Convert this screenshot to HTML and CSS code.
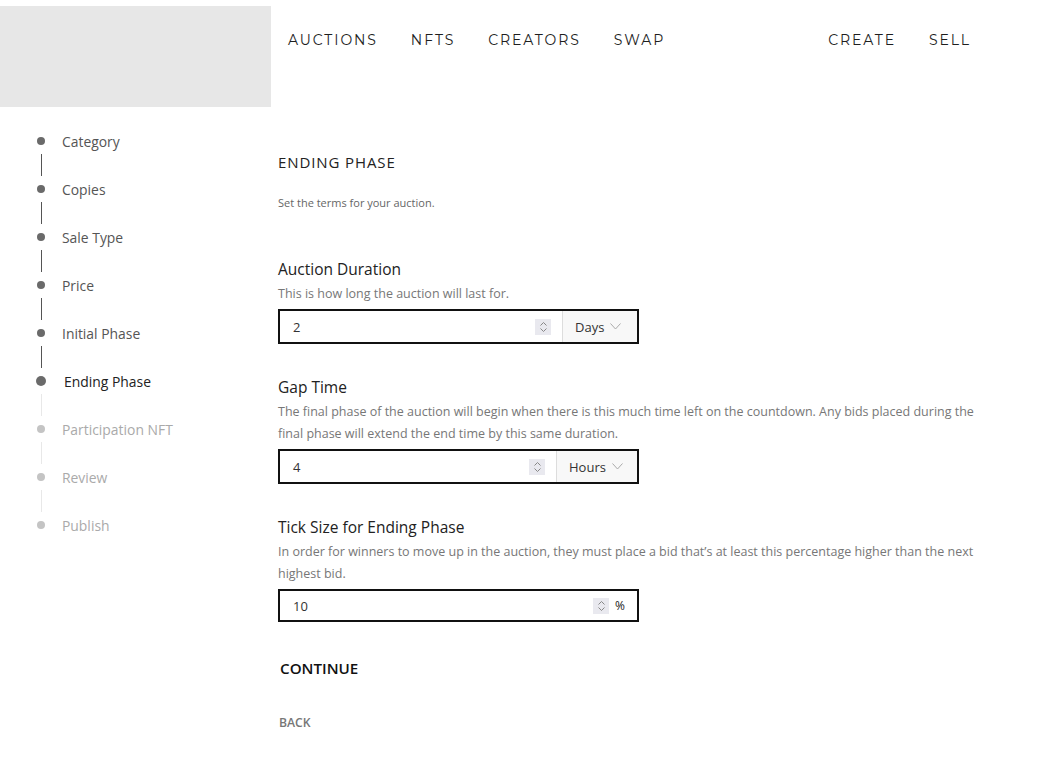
FILE: index.html
```html
<!DOCTYPE html>
<html>
<head>
<meta charset="utf-8">
<link rel="stylesheet" href="styles.css">
</head>
<body>
<header class="header">
  <div class="logo-box"></div>
  <nav class="nav">
    <div class="nav-left">
      <a class="nav-link">AUCTIONS</a>
      <a class="nav-link">NFTS</a>
      <a class="nav-link">CREATORS</a>
      <a class="nav-link">SWAP</a>
    </div>
    <div class="nav-right">
      <a class="nav-link">CREATE</a>
      <a class="nav-link">SELL</a>
    </div>
  </nav>
</header>
<div class="page">
  <aside class="steps">
    <div class="step done"><span class="dot"></span><span class="label">Category</span></div>
    <div class="connector done"></div>
    <div class="step done"><span class="dot"></span><span class="label">Copies</span></div>
    <div class="connector done"></div>
    <div class="step done"><span class="dot"></span><span class="label">Sale Type</span></div>
    <div class="connector done"></div>
    <div class="step done"><span class="dot"></span><span class="label">Price</span></div>
    <div class="connector done"></div>
    <div class="step done"><span class="dot"></span><span class="label">Initial Phase</span></div>
    <div class="connector done"></div>
    <div class="step current"><span class="dot"></span><span class="label">Ending Phase</span></div>
    <div class="connector"></div>
    <div class="step"><span class="dot"></span><span class="label">Participation NFT</span></div>
    <div class="connector"></div>
    <div class="step"><span class="dot"></span><span class="label">Review</span></div>
    <div class="connector"></div>
    <div class="step"><span class="dot"></span><span class="label">Publish</span></div>
  </aside>
  <main class="main">
    <h1 class="title">ENDING PHASE</h1>
    <p class="subtitle">Set the terms for your auction.</p>

    <section class="field first">
      <h2 class="field-title">Auction Duration</h2>
      <p class="field-desc">This is how long the auction will last for.</p>
      <div class="input-box">
        <span class="value">2</span>
        <span class="spinner"><svg width="9" height="12" viewBox="0 0 9 12"><path d="M1.5 4.5 L4.5 1.5 L7.5 4.5 M1.5 7.5 L4.5 10.5 L7.5 7.5" fill="none" stroke="#888" stroke-width="1"/></svg></span>
        <span class="select">Days <svg width="11" height="7" viewBox="0 0 11 7"><path d="M0.5 0.5 L5.5 6 L10.5 0.5" fill="none" stroke="#aaa" stroke-width="1"/></svg></span>
      </div>
    </section>

    <section class="field">
      <h2 class="field-title">Gap Time</h2>
      <p class="field-desc">The final phase of the auction will begin when there is this much time left on the countdown. Any bids placed during the final phase will extend the end time by this same duration.</p>
      <div class="input-box">
        <span class="value">4</span>
        <span class="spinner"><svg width="9" height="12" viewBox="0 0 9 12"><path d="M1.5 4.5 L4.5 1.5 L7.5 4.5 M1.5 7.5 L4.5 10.5 L7.5 7.5" fill="none" stroke="#888" stroke-width="1"/></svg></span>
        <span class="select hours">Hours <svg width="11" height="7" viewBox="0 0 11 7"><path d="M0.5 0.5 L5.5 6 L10.5 0.5" fill="none" stroke="#aaa" stroke-width="1"/></svg></span>
      </div>
    </section>

    <section class="field">
      <h2 class="field-title">Tick Size for Ending Phase</h2>
      <p class="field-desc">In order for winners to move up in the auction, they must place a bid that’s at least this percentage higher than the next highest bid.</p>
      <div class="input-box short">
        <span class="value">10</span>
        <span class="spinner"><svg width="9" height="12" viewBox="0 0 9 12"><path d="M1.5 4.5 L4.5 1.5 L7.5 4.5 M1.5 7.5 L4.5 10.5 L7.5 7.5" fill="none" stroke="#888" stroke-width="1"/></svg></span>
        <span class="suffix">%</span>
      </div>
    </section>

    <button class="continue">CONTINUE</button>
    <button class="back">BACK</button>
  </main>
</div>
</body>
</html>
```

FILE: styles.css
```css
* { box-sizing: border-box; }
body {
  margin: 0;
  font-family: "Open Sans", "Noto Sans", sans-serif;
  color: #222;
  background: #fff;
}
.header {
  display: flex;
  padding-top: 6px;
  height: 107px;
}
.logo-box {
  width: 271px;
  height: 101px;
  background: #e7e7e7;
  flex-shrink: 0;
}
.nav {
  display: flex;
  justify-content: space-between;
  width: 700px;
  padding-left: 17px;
  padding-top: 25px;
}
.nav-left, .nav-right {
  display: flex;
  gap: 33px;
  align-items: flex-start;
}
.nav-link {
  font-family: "Montserrat", "Lato", sans-serif;
  font-size: 14px;
  letter-spacing: 1.9px;
  color: #1e1e1e;
  line-height: 18px;
}
.page {
  display: flex;
}
.steps {
  width: 278px;
  padding-left: 37px;
  padding-top: 25px;
  flex-shrink: 0;
}
.step {
  display: flex;
  align-items: center;
  height: 18px;
}
.dot {
  width: 8px;
  height: 8px;
  border-radius: 50%;
  background: #c4c4c4;
  margin-right: 17px;
  flex-shrink: 0;
}
.step.done .dot, .step.current .dot { background: #6a6a6a; }
.step.current .dot {
  width: 10px;
  height: 10px;
  margin-left: -1px;
  margin-right: 18px;
}
.label {
  font-size: 13.9px;
  color: #aaa;
}
.step.done .label { color: #555; }
.step.current .label { color: #222; }
.connector {
  width: 1px;
  height: 30px;
  margin-left: 4px;
  padding: 4px 0;
  background: #e8e8e8;
  background-clip: content-box;
}
.connector.done { background-color: #555; }
.main {
  padding-top: 43px;
  width: 706px;
}
.title {
  margin: 0;
  font-size: 15px;
  font-weight: 400;
  letter-spacing: 0.9px;
  line-height: 24px;
  color: #222;
}
.subtitle {
  margin: 22px 0 0;
  font-size: 11px;
  line-height: 14px;
  color: #666;
}
.field { margin-top: 32px; }
.field.first { margin-top: 48px; }
.field-title {
  margin: 0;
  font-size: 15.5px;
  font-weight: 400;
  line-height: 22px;
  color: #222;
}
.field-desc {
  margin: 3px 0 4px;
  font-size: 12.5px;
  line-height: 22px;
  color: #777;
}
.input-box {
  display: flex;
  align-items: stretch;
  width: 361px;
  height: 35px;
  border: 2px solid #111;
  background: #fff;
}
.input-box.short { height: 33px; }
.value {
  flex: 1;
  display: flex;
  align-items: center;
  padding-left: 13px;
  font-size: 13px;
  color: #333;
}
.spinner {
  align-self: center;
  width: 16px;
  height: 16px;
  background: #e9e9ef;
  display: flex;
  align-items: center;
  justify-content: center;
  margin-right: 11px;
}
.select {
  display: flex;
  align-items: center;
  gap: 6px;
  width: 75px;
  padding-left: 12px;
  background: #f8f8f8;
  border-left: 1px solid #ddd;
  font-size: 13px;
  color: #333;
}
.select.hours { width: 81px; padding-left: 12px; }
.suffix {
  display: flex;
  align-items: center;
  font-size: 12px;
  margin-right: 12px;
  margin-left: -5px;
  color: #222;
}
.continue {
  display: block;
  margin-top: 36px;
  padding: 0 0 0 2px;
  border: 0;
  background: none;
  font-family: "Open Sans", sans-serif;
  font-size: 15.2px;
  font-weight: 600;
  color: #111;
  line-height: 20px;
}
.back {
  display: block;
  margin-top: 37px;
  padding: 0 0 0 1px;
  border: 0;
  background: none;
  font-family: "Open Sans", sans-serif;
  font-size: 12.2px;
  font-weight: 600;
  color: #777;
  line-height: 16px;
}
```
